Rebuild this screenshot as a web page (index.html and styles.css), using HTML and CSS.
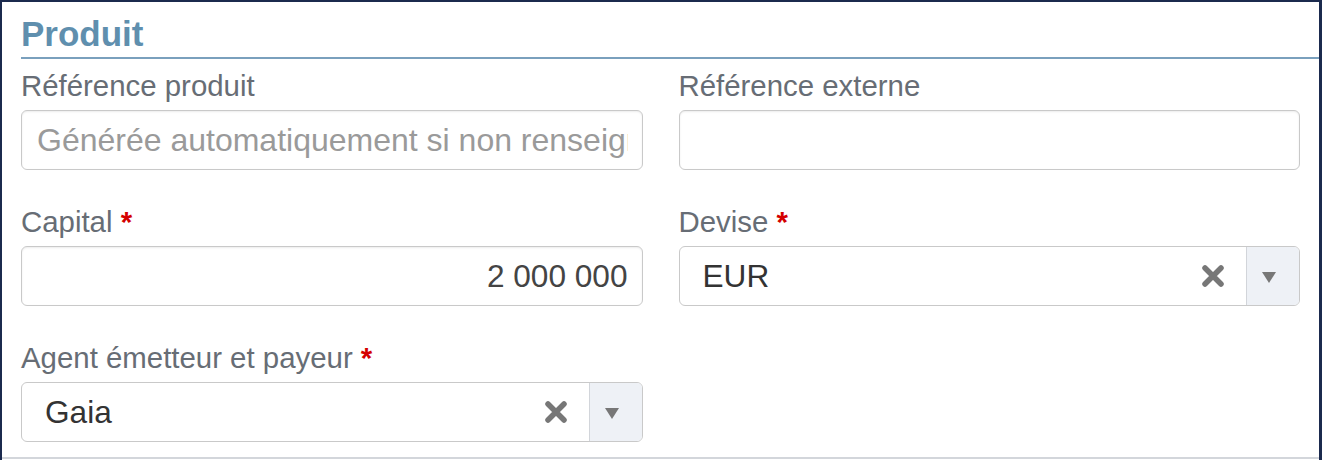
FILE: index.html
```html
<!DOCTYPE html>
<html lang="fr">
<head>
<meta charset="utf-8">
<title>Produit</title>
<link rel="stylesheet" href="styles.css">
</head>
<body>
<div class="frame">
  <h2 class="section-title">Produit</h2>
  <div class="fields">
    <div class="field">
      <label class="label">Référence produit</label>
      <div class="input input-ph"><span class="placeholder">Générée automatiquement si non renseigné</span></div>
    </div>
    <div class="field">
      <label class="label">Référence externe</label>
      <div class="input"></div>
    </div>
    <div class="field">
      <label class="label">Capital <span class="req">*</span></label>
      <div class="input input-right"><span class="value">2 000 000</span></div>
    </div>
    <div class="field">
      <label class="label">Devise <span class="req">*</span></label>
      <div class="select">
        <span class="select-value">EUR</span>
        <span class="select-clear"><svg width="24" height="22" viewBox="0 0 24 22"><path d="M4 3 L20 19 M20 3 L4 19" stroke="#777" stroke-width="5.5" stroke-linecap="round"/></svg></span>
        <span class="select-arrow"><svg width="14" height="11" viewBox="0 0 14 11"><path d="M0 0 H14 L7 11 Z" fill="#777"/></svg></span>
      </div>
    </div>
    <div class="field">
      <label class="label">Agent émetteur et payeur <span class="req">*</span></label>
      <div class="select">
        <span class="select-value">Gaia</span>
        <span class="select-clear"><svg width="24" height="22" viewBox="0 0 24 22"><path d="M4 3 L20 19 M20 3 L4 19" stroke="#777" stroke-width="5.5" stroke-linecap="round"/></svg></span>
        <span class="select-arrow"><svg width="14" height="11" viewBox="0 0 14 11"><path d="M0 0 H14 L7 11 Z" fill="#777"/></svg></span>
      </div>
    </div>
  </div>
  <div class="bottom-rule"></div>
</div>
</body>
</html>
```
FILE: styles.css
```css
* { box-sizing: border-box; }
html, body { margin: 0; padding: 0; background: #fff; }
body { font-family: "Liberation Sans", Arial, Helvetica, sans-serif; }

.frame {
  width: 1322px;
  height: 460px;
  overflow: hidden;
  border-left: 2px solid #1b2a4e;
  border-top: 2px solid #1b2a4e;
  border-right: 3px solid #1b2a4e;
  padding: 12px 0 0 19px;
}

.section-title {
  margin: 0;
  font-size: 35px;
  line-height: 40px;
  font-weight: bold;
  color: #5f8fae;
  padding-bottom: 3px;
  border-bottom: 2px solid #7aa0bd;
}

.fields {
  display: grid;
  grid-template-columns: minmax(0, 1fr) minmax(0, 1fr);
  column-gap: 36px;
  row-gap: 35px;
  padding: 10px 19px 0 0;
}

.field { display: flex; flex-direction: column; min-width: 0; }

.label {
  font-size: 29.4px;
  line-height: 34px;
  color: #676d75;
  margin-bottom: 7px;
  white-space: nowrap;
}

.req { color: #d40000; font-weight: bold; }

.input {
  height: 60px;
  border: 1px solid #c9c9c9;
  border-radius: 6px;
  box-shadow: inset 0 1px 2px rgba(0, 0, 0, 0.08);
  padding: 0 14px 0 15px;
  display: flex;
  align-items: center;
  font-size: 31.6px;
  color: #444;
}

.input-ph {
  font-size: 32px;
  padding-right: 14px;
}

.input-right { justify-content: flex-end; }

.placeholder {
  display: block;
  overflow: hidden;
  white-space: nowrap;
  color: #9a9a9a;
  width: 100%;
}

.value { color: #444; }

.select {
  height: 60px;
  border: 1px solid #c9c9c9;
  border-radius: 6px;
  display: flex;
  align-items: stretch;
  font-size: 31.6px;
  color: #333;
}

.select-value {
  flex: 1;
  display: flex;
  align-items: center;
  padding-left: 23px;
}

.select-clear {
  display: flex;
  align-items: center;
  margin-right: 21px;
}

.select-arrow {
  width: 53px;
  border-left: 1px solid #d2d5da;
  background: #eef1f6;
  border-radius: 0 5px 5px 0;
  display: flex;
  align-items: center;
  justify-content: center;
  padding-right: 8px;
  padding-top: 2px;
}

.bottom-rule {
  margin-top: 15px;
  margin-left: -19px;
  height: 2px;
  background: #d3d6db;
}
```
